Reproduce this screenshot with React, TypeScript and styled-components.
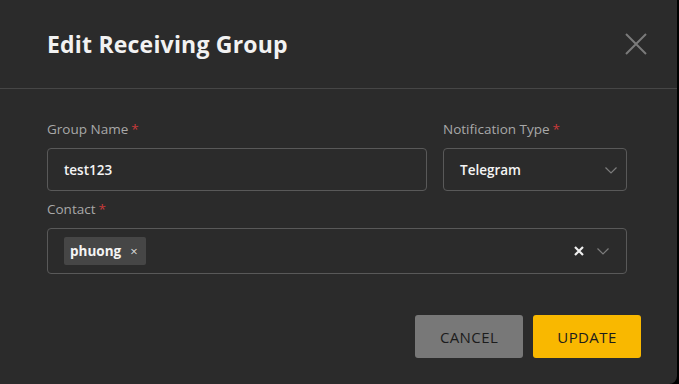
import { FC } from 'react';
import styled, { createGlobalStyle } from 'styled-components';

const GlobalStyle = createGlobalStyle`
   html, body {
      margin: 0;
      padding: 0;
      background: #000;
      font-family: "Open Sans", "Noto Sans", sans-serif;
   }
`;

const Dialog = styled.div`
   width: 677px;
   height: 384px;
   background: #2b2b2b;
   border-radius: 0 0 8px 0;
   display: flex;
   flex-direction: column;
   box-sizing: border-box;
`;

const Header = styled.div`
   height: 88px;
   display: flex;
   align-items: center;
   justify-content: space-between;
   padding: 0 29px 0 47px;
   border-bottom: 1px solid #464646;
`;

const Title = styled.h2`
   margin: 0;
   font-size: 23px;
   font-weight: 700;
   color: #f2f2f2;
   letter-spacing: 0.2px;
`;

const CloseBtn = styled.button`
   background: none;
   border: none;
   padding: 0;
   width: 24px;
   height: 24px;
   display: flex;
   cursor: pointer;
`;

const Body = styled.div`
   padding: 30px 50px 0 47px;
   display: grid;
   grid-template-columns: 380px 184px;
   column-gap: 16px;
   row-gap: 8px;
`;

const Field = styled.div<{ wide?: boolean }>`
   display: flex;
   flex-direction: column;
   grid-column: ${(p) => (p.wide ? '1 / -1' : 'auto')};
`;

const Label = styled.label`
   font-size: 13.5px;
   line-height: 20px;
   color: #a8a8a8;
   margin-bottom: 9px;

   span {
      color: #c83a3a;
      margin-left: 3px;
   }
`;

const Box = styled.div<{ tall?: boolean }>`
   height: ${(p) => (p.tall ? '46px' : '43px')};
   box-sizing: border-box;
   border: 1px solid #595959;
   border-radius: 4px;
   display: flex;
   align-items: center;
   padding: 0 8px 0 16px;
   color: #f4f4f4;
   font-size: 13.5px;
   font-weight: 600;
`;

const Value = styled.span`
   flex: 1;
`;

const Tag = styled.div`
   height: 28px;
   display: flex;
   align-items: center;
   gap: 9px;
   padding: 0 8px 0 6px;
   background: #464646;
   border-radius: 2px;
   font-size: 13.5px;
   font-weight: 700;
   color: #f4f4f4;
`;

const TagRemove = styled.span`
   font-size: 13px;
   font-weight: 400;
   color: #dcdcdc;
`;

const Indicators = styled.div`
   margin-left: auto;
   display: flex;
   align-items: center;
   gap: 12px;
   padding-right: 8px;
`;

const Footer = styled.div`
   display: flex;
   justify-content: flex-end;
   gap: 10px;
   padding: 41px 36px 0 0;
`;

const Button = styled.button<{ primary?: boolean }>`
   width: 108px;
   height: 43px;
   border: none;
   border-radius: 3px;
   background: ${(p) => (p.primary ? '#f9b800' : '#787878')};
   color: #1c1c1c;
   font-family: "Open Sans", "Noto Sans", sans-serif;
   font-size: 15px;
   letter-spacing: 0.4px;
   cursor: pointer;
`;

const Chevron: FC = () => (
   <svg width="14" height="14" viewBox="0 0 14 14" fill="none">
      <path d="M1.5 4.5L7 10L12.5 4.5" stroke="#7c7c7c" strokeWidth="1.2" />
   </svg>
);

const App: FC = (): JSX.Element => {
   return (
      <>
         <GlobalStyle />
         <Dialog>
            <Header>
               <Title>Edit Receiving Group</Title>
               <CloseBtn aria-label="close">
                  <svg width="24" height="24" viewBox="0 0 24 24" fill="none">
                     <path d="M2 2L22 22M22 2L2 22" stroke="#7a7a7a" strokeWidth="2" />
                  </svg>
               </CloseBtn>
            </Header>
            <Body>
               <Field>
                  <Label>
                     Group Name<span>*</span>
                  </Label>
                  <Box>
                     <Value>test123</Value>
                  </Box>
               </Field>
               <Field>
                  <Label>
                     Notification Type<span>*</span>
                  </Label>
                  <Box>
                     <Value>Telegram</Value>
                     <Chevron />
                  </Box>
               </Field>
               <Field wide>
                  <Label>
                     Contact<span>*</span>
                  </Label>
                  <Box tall>
                     <Tag>
                        phuong
                        <TagRemove>×</TagRemove>
                     </Tag>
                     <Indicators>
                        <svg width="10" height="10" viewBox="0 0 10 10" fill="none">
                           <path d="M1 1L9 9M9 1L1 9" stroke="#f0f0f0" strokeWidth="2.2" />
                        </svg>
                        <Chevron />
                     </Indicators>
                  </Box>
               </Field>
            </Body>
            <Footer>
               <Button>CANCEL</Button>
               <Button primary>UPDATE</Button>
            </Footer>
         </Dialog>
      </>
   );
};

export default App;
